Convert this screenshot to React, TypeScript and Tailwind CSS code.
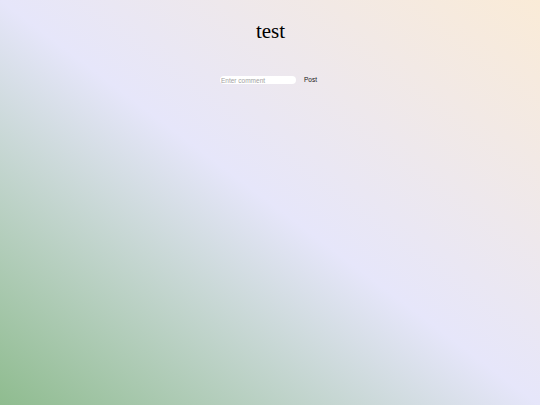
import { useState } from 'react';

export default function App() {
  const [comment, setComment] = useState('');

  return (
    <div className="w-full min-h-screen bg-[linear-gradient(to_top_right,#8fbc8f,#e6e6fa,#faebd7)] flex flex-col items-center pt-[21px] font-[Liberation_Sans,Arial,sans-serif]">
      <h1 className="text-[21px] leading-none text-black font-normal font-[Liberation_Serif,Times_New_Roman,serif] ml-[1px]">test</h1>
      <div className="flex items-center mt-[34px]">
        <input
          value={comment}
          onChange={(e) => setComment(e.target.value)}
          placeholder="Enter comment"
          className="w-[76px] h-[8px] bg-white rounded-[4px] px-[1px] text-[6.5px] leading-none text-neutral-800 placeholder:text-neutral-400 outline-none"
        />
        <button className="ml-[5px] px-[3px] pt-[1px] text-[6.5px] leading-none text-neutral-900 bg-transparent">Post</button>
      </div>
    </div>
  );
}
